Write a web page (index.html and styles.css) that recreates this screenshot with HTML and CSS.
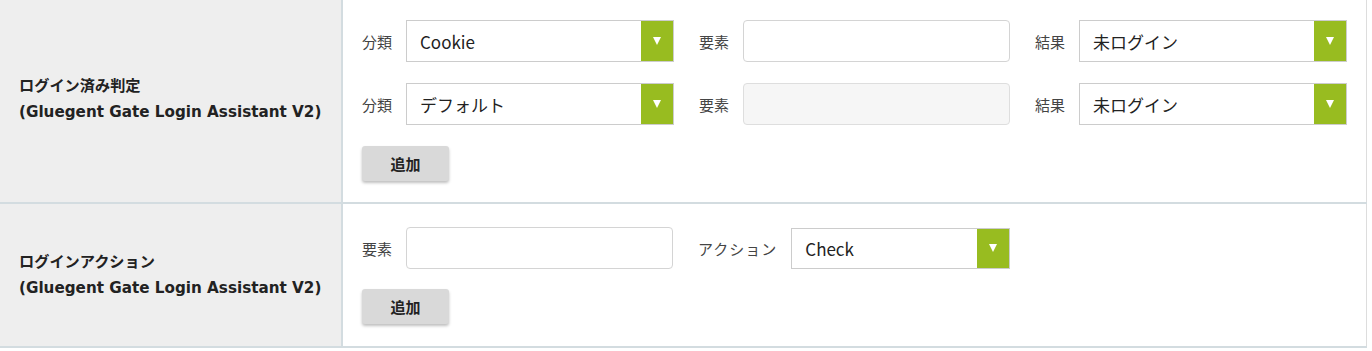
FILE: index.html
```html
<!DOCTYPE html>
<html lang="ja">
<head>
  <meta charset="UTF-8">
  <title>ログイン設定</title>
  <link rel="stylesheet" href="styles.css">
</head>
<body>
  <table class="settings">
    <tr>
      <th>ログイン済み判定<br>(Gluegent Gate Login Assistant V2)</th>
      <td>
        <div class="line">
          <label class="field">
            <span class="caption">分類</span>
            <span class="select wide">
              <span class="value">Cookie</span>
              <span class="arrow"></span>
            </span>
          </label>
          <label class="field">
            <span class="caption">要素</span>
            <input type="text" class="text">
          </label>
          <label class="field">
            <span class="caption">結果</span>
            <span class="select wide">
              <span class="value">未ログイン</span>
              <span class="arrow"></span>
            </span>
          </label>
        </div>
        <div class="line">
          <label class="field">
            <span class="caption">分類</span>
            <span class="select wide">
              <span class="value">デフォルト</span>
              <span class="arrow"></span>
            </span>
          </label>
          <label class="field">
            <span class="caption">要素</span>
            <input type="text" class="text" disabled>
          </label>
          <label class="field">
            <span class="caption">結果</span>
            <span class="select wide">
              <span class="value">未ログイン</span>
              <span class="arrow"></span>
            </span>
          </label>
        </div>
        <button class="add">追加</button>
      </td>
    </tr>
    <tr>
      <th>ログインアクション<br>(Gluegent Gate Login Assistant V2)</th>
      <td class="second">
        <div class="line">
          <label class="field">
            <span class="caption">要素</span>
            <input type="text" class="text">
          </label>
          <label class="field">
            <span class="caption long">アクション</span>
            <span class="select narrow">
              <span class="value">Check</span>
              <span class="arrow"></span>
            </span>
          </label>
        </div>
        <button class="add">追加</button>
      </td>
    </tr>
  </table>
</body>
</html>
```

FILE: styles.css
```css
body {
  margin: 0;
  background: #ffffff;
  font-family: 'Noto Sans CJK JP', 'Noto Sans', sans-serif;
  color: #333333;
}

.settings {
  width: 1367px;
  border-collapse: collapse;
  margin-top: -4px;
  border-right: 1px solid #dddddd;
}

.settings tr {
  border-bottom: 2px solid #d3dce0;
}

.settings th {
  width: 322px;
  padding: 0 0 0 19px;
  background: #eeeeee;
  border-right: 2px solid #d3dce0;
  text-align: left;
  font-family: 'DejaVu Sans', 'Noto Sans CJK JP', sans-serif;
  font-size: 15.2px;
  line-height: 26px;
  font-weight: bold;
  color: #222222;
}

.settings td {
  padding: 24px 0 21px 19px;
  vertical-align: top;
}

.settings td.second {
  padding-top: 23px;
  padding-bottom: 22px;
}

.line {
  display: flex;
  gap: 25px;
  margin-bottom: 21px;
}

.second .line {
  margin-bottom: 20px;
}

.field {
  display: flex;
  align-items: center;
}

.caption {
  font-size: 15px;
  color: #444444;
  margin-right: 14px;
}

.caption.long {
  letter-spacing: 1px;
  margin-right: 14px;
}

.text {
  width: 267px;
  height: 42px;
  box-sizing: border-box;
  border: 1px solid #d4d4d4;
  border-radius: 4px;
  background: #ffffff;
  font-size: 16px;
  padding: 0 12px;
}

.text:disabled {
  background: #f6f6f6;
  border-color: #dedede;
}

.select {
  display: flex;
  height: 42px;
  box-sizing: border-box;
  border: 1px solid #cccccc;
  background: #ffffff;
}

.select.wide {
  width: 268px;
}

.select.narrow {
  width: 219px;
  height: 41px;
}

.select .value {
  flex: 1;
  display: flex;
  align-items: center;
  padding-left: 13px;
  font-size: 17px;
  color: #222222;
}

.select .arrow {
  width: 32px;
  background: #98bc20;
  display: flex;
  align-items: center;
  justify-content: center;
}

.select .arrow::after {
  content: '';
  border-left: 4px solid transparent;
  border-right: 4px solid transparent;
  border-top: 8px solid #ffffff;
}

.add {
  width: 87px;
  height: 35px;
  border: none;
  border-radius: 3px;
  background: #d9d9d9;
  box-shadow: 0 2px 3px rgba(0, 0, 0, 0.25);
  font-family: inherit;
  font-size: 15px;
  font-weight: bold;
  color: #222222;
  cursor: pointer;
}
```
